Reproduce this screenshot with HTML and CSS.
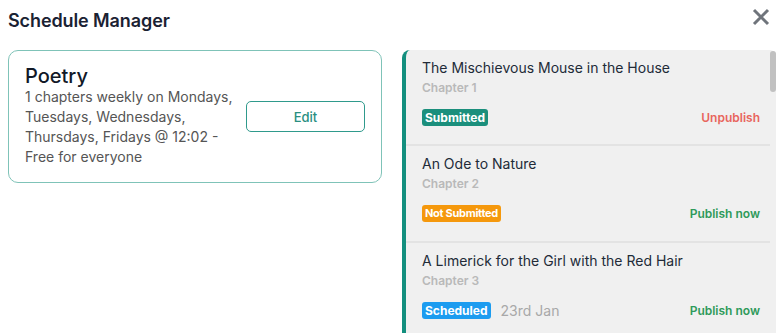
FILE: index.html
```html
<!DOCTYPE html>
<html>
<head>
<meta charset="utf-8">
<link rel="stylesheet" href="styles.css">
</head>
<body>
<div class="modal">
  <div class="header">
    <h1 class="title">Schedule Manager</h1>
    <button class="close" aria-label="Close">
      <svg width="18" height="18" viewBox="0 0 18 18"><path d="M2 2L16 16M16 2L2 16" stroke="#6f747b" stroke-width="3" stroke-linecap="butt"/></svg>
    </button>
  </div>
  <div class="content">
    <div class="left">
      <div class="card">
        <div class="card-text">
          <div class="card-title">Poetry</div>
          <div class="card-desc">1 chapters weekly on Mondays, Tuesdays, Wednesdays, Thursdays, Fridays @ 12:02 - Free for everyone</div>
        </div>
        <button class="edit">Edit</button>
      </div>
    </div>
    <div class="panel">
      <div class="thumb"></div>
      <div class="item">
        <div class="item-title">The Mischievous Mouse in the House</div>
        <div class="item-chapter">Chapter 1</div>
        <div class="item-row">
          <div class="row-left"><span class="badge badge-submitted">Submitted</span></div>
          <span class="action action-red">Unpublish</span>
        </div>
      </div>
      <div class="item">
        <div class="item-title">An Ode to Nature</div>
        <div class="item-chapter">Chapter 2</div>
        <div class="item-row">
          <div class="row-left"><span class="badge badge-not">Not Submitted</span></div>
          <span class="action action-green">Publish now</span>
        </div>
      </div>
      <div class="item">
        <div class="item-title">A Limerick for the Girl with the Red Hair</div>
        <div class="item-chapter">Chapter 3</div>
        <div class="item-row">
          <div class="row-left"><span class="badge badge-scheduled">Scheduled</span><span class="date">23rd Jan</span></div>
          <span class="action action-green">Publish now</span>
        </div>
      </div>
    </div>
  </div>
</div>
</body>
</html>
```

FILE: styles.css
```css
* { box-sizing: border-box; }
html, body { margin: 0; padding: 0; background: #fff; overflow: hidden; }
body { font-family: Inter, "Noto Sans", sans-serif; }
.modal { padding: 0 5px 0 8px; width: 781px; height: 333px; }
.header { display: flex; justify-content: space-between; align-items: flex-start; height: 50px; }
.title { margin: 0; padding-top: 10px; font-size: 18px; font-weight: 600; color: #1a2233; line-height: 22px; letter-spacing: -0.1px; }
.close { margin: 8px 6px 0 0; padding: 0; border: 0; background: none; width: 18px; height: 18px; display: block; }
.close svg { display: block; }
.content { display: flex; gap: 20px; align-items: flex-start; }
.left { width: 374px; }
.card { border: 1px solid #7fc3b8; border-radius: 10px; padding: 15px 16px 15px 16px; display: flex; align-items: center; }
.card-text { flex: 0 0 216px; }
.card-title { font-size: 20px; font-weight: 500; color: #111827; line-height: 21px; }
.card-desc { font-size: 14px; color: #555; line-height: 20px; }
.edit { width: 119px; height: 31px; margin-left: auto; border: 1px solid #2f9a8c; border-radius: 5px; background: #fff; color: #2a8f81; font-family: inherit; font-size: 13px; font-weight: 500; }
.panel { position: relative; width: 374px; height: 300px; background: #f0f0f0; border-left: 4px solid #138f7e; border-top-left-radius: 8px; border-top-right-radius: 6px; padding-right: 6px; }
.thumb { position: absolute; right: 0; top: 1px; width: 6px; height: 41px; background: #c1c1c1; border-radius: 3px; }
.item { height: 96px; border-bottom: 2px solid #e3e3e3; padding: 8px 10px 0 16px; }
.item + .item { height: 97px; }
.item-title { font-size: 14px; line-height: 20px; color: #222b38; }
.item-chapter { font-size: 12px; line-height: 20px; font-weight: 600; color: #b9b9b9; }
.item-row { display: flex; justify-content: space-between; align-items: center; margin-top: 11px; height: 17px; }
.row-left { display: flex; align-items: center; gap: 10px; }
.badge { display: inline-block; color: #fff; font-weight: 700; border-radius: 3px; height: 17px; line-height: 17px; padding: 0 3px; font-size: 12px; }
.badge-submitted { background: #1b8f7c; }
.badge-not { background: #f5980c; font-size: 11px; letter-spacing: -0.3px; }
.badge-scheduled { background: #1c9cf0; }
.date { font-size: 14px; color: #a8a8a8; }
.action { font-size: 12px; font-weight: 600; }
.action-red { color: #e8655d; }
.action-green { color: #2e9a5a; }
```
